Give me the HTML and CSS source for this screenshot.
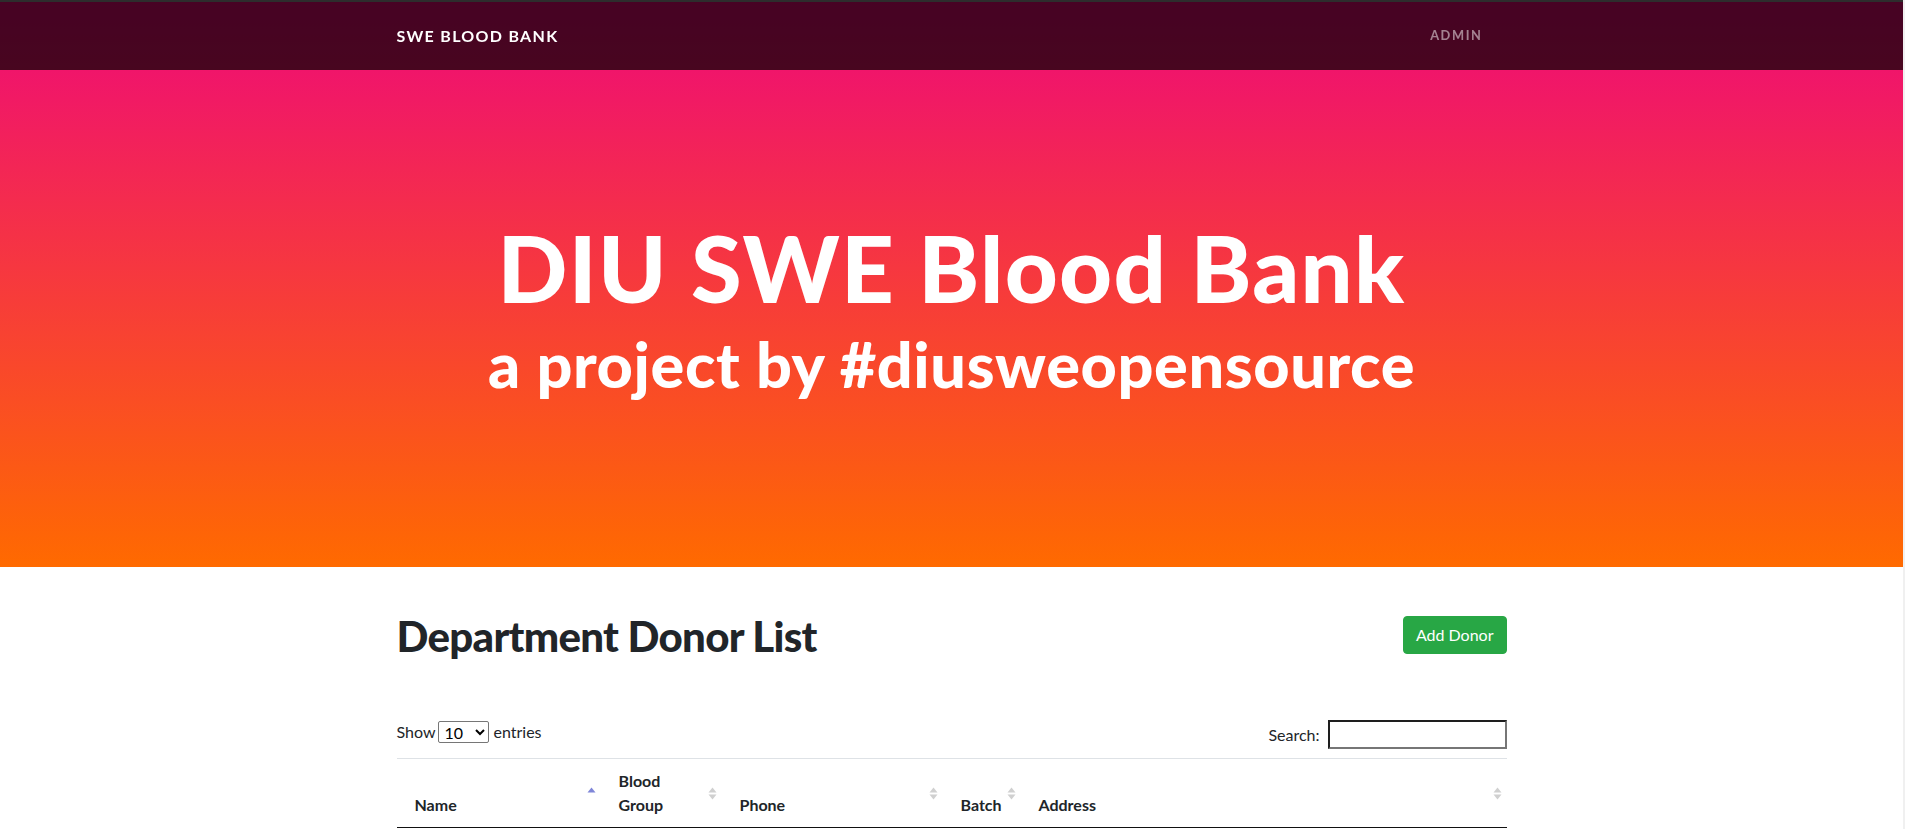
FILE: index.html
```html
<!DOCTYPE html>
<html lang="en">
<head>
<meta charset="utf-8">
<title>SWE Blood Bank</title>
<link rel="stylesheet" href="styles.css">
</head>
<body>
<nav class="navbar">
  <div class="container nav-inner">
    <a class="brand" href="#">SWE Blood Bank</a>
    <a class="nav-link" href="#">Admin</a>
  </div>
</nav>
<header class="masthead">
  <h1 class="masthead-heading">DIU SWE Blood Bank</h1>
  <h2 class="masthead-subheading">a project by #diusweopensource</h2>
</header>
<main class="container donors">
  <div class="donors-head">
    <h2 class="donors-title">Department Donor List</h2>
    <a class="btn-add" href="#">Add Donor</a>
  </div>
  <div class="dt-toolbar">
    <label class="dt-length">Show
      <select class="dt-select">
        <option>10</option>
        <option>25</option>
        <option>50</option>
        <option>100</option>
      </select>
      entries</label>
    <label class="dt-filter">Search:<input class="dt-search" type="search"></label>
  </div>
  <table class="dt-table">
    <colgroup>
      <col class="c-name">
      <col class="c-group">
      <col class="c-phone">
      <col class="c-batch">
      <col class="c-address">
    </colgroup>
    <thead>
      <tr>
        <th>Name<svg class="sort-icon" viewBox="0 0 19 19" width="19" height="19"><polygon class="asc" points="5.5,8.5 9.5,3.5 13.5,8.5"/></svg></th>
        <th class="wrap">Blood Group<svg class="sort-icon" viewBox="0 0 19 19" width="19" height="19"><polygon class="both" points="5.5,8.5 9.5,3.5 13.5,8.5"/><polygon class="both" points="5.5,10.5 9.5,15.5 13.5,10.5"/></svg></th>
        <th>Phone<svg class="sort-icon" viewBox="0 0 19 19" width="19" height="19"><polygon class="both" points="5.5,8.5 9.5,3.5 13.5,8.5"/><polygon class="both" points="5.5,10.5 9.5,15.5 13.5,10.5"/></svg></th>
        <th>Batch<svg class="sort-icon" viewBox="0 0 19 19" width="19" height="19"><polygon class="both" points="5.5,8.5 9.5,3.5 13.5,8.5"/><polygon class="both" points="5.5,10.5 9.5,15.5 13.5,10.5"/></svg></th>
        <th>Address<svg class="sort-icon" viewBox="0 0 19 19" width="19" height="19"><polygon class="both" points="5.5,8.5 9.5,3.5 13.5,8.5"/><polygon class="both" points="5.5,10.5 9.5,15.5 13.5,10.5"/></svg></th>
      </tr>
    </thead>
    <tbody></tbody>
  </table>
</main>
</body>
</html>
```

FILE: styles.css
```css
* { box-sizing: border-box; }
html {
  margin: 0;
  padding: 0;
  background: #f0f0f0;
}
body {
  margin: 0 2px 0 0;
  padding: 0;
  font-family: Lato, "Liberation Sans", sans-serif;
  font-size: 16px;
  line-height: 1.5;
  color: #212529;
  background: #fff;
  min-height: 100vh;
}
.container {
  width: 1140px;
  margin: 0 auto;
  padding: 0 15px;
}

/* navbar */
.navbar {
  position: fixed;
  top: 0;
  left: 0;
  right: 2px;
  z-index: 10;
  background: rgba(0, 0, 0, 0.7);
  border-top: 2px solid #2d2d2d;
  padding: 16px 0 17px;
}
.nav-inner {
  display: flex;
  justify-content: space-between;
  align-items: center;
}
.brand {
  color: #fff;
  text-decoration: none;
  text-transform: uppercase;
  font-weight: 700;
  font-size: 16px;
  letter-spacing: 1.3px;
  line-height: 24px;
  padding: 5px 0;
}
.nav-link {
  color: rgba(255, 255, 255, 0.5);
  text-decoration: none;
  text-transform: uppercase;
  font-weight: 700;
  font-size: 12.8px;
  letter-spacing: 1.6px;
  line-height: 19.2px;
  padding: 8px;
  margin-right: 16px;
}

/* masthead */
.masthead {
  height: 567px;
  padding-top: 213px;
  text-align: center;
  color: #fff;
  background: linear-gradient(0deg, #ff6a00 0%, #ee0979 100%);
}
.masthead-heading {
  margin: 0;
  font-size: 92px;
  font-weight: 900;
  line-height: 1.2;
  letter-spacing: 1.3px;
}
.masthead-subheading {
  margin: 3px 0 0;
  font-size: 63px;
  font-weight: 900;
  line-height: 1.2;
  letter-spacing: 0.6px;
}

/* donors */
.donors {
  padding-top: 44px;
}
.donors-head {
  display: flex;
  justify-content: space-between;
  align-items: flex-start;
}
.donors-title {
  margin: 0;
  font-size: 42px;
  font-weight: 900;
  line-height: 1.2;
  letter-spacing: -0.7px;
}
.btn-add {
  margin-top: 5px;
  background: #28a745;
  border: 1px solid #28a745;
  color: #fff;
  padding: 6px 12px;
  border-radius: 4px;
  font-size: 16px;
  line-height: 24px;
  text-decoration: none;
}

.dt-toolbar {
  margin-top: 59px;
  display: flex;
  justify-content: space-between;
  align-items: flex-start;
}
.dt-length {
  display: flex;
  align-items: center;
}
.dt-select {
  margin: 0 5px 0 2px;
  width: 51px;
  height: 22px;
  font-family: Lato, "Liberation Sans", sans-serif;
  font-size: 16px;
  color: #000;
  background: #fff;
  border: 1px solid #767676;
  border-radius: 2px;
  padding: 0 0 0 2px;
}
.dt-filter {
  display: flex;
  align-items: center;
}
.dt-search {
  margin-left: 8px;
  width: 179px;
  height: 29px;
  border: 2px solid;
  border-color: #1e1e1e #767676 #767676 #1e1e1e;
  padding: 1px 2px;
  font-family: Lato, "Liberation Sans", sans-serif;
  font-size: 16px;
  background: #fff;
}

.dt-table {
  margin-top: 9px;
  width: 100%;
  table-layout: fixed;
  border-collapse: separate;
  border-spacing: 0;
}
.c-name { width: 204px; }
.c-group { width: 121px; }
.c-phone { width: 221px; }
.c-batch { width: 78px; }
.c-address { width: 486px; }
.dt-table th {
  position: relative;
  padding: 10px 18px;
  text-align: left;
  vertical-align: bottom;
  border-top: 1px solid #dee2e6;
  border-bottom: 1px solid #111;
  font-weight: 700;
  line-height: 24px;
  white-space: nowrap;
}
.dt-table th.wrap { white-space: normal; }
.sort-icon {
  position: absolute;
  right: 0;
  top: 50%;
  margin-top: -9.5px;
}
.sort-icon .asc { fill: #7f86d8; }
.sort-icon .both { fill: #d0d0d0; }
```
